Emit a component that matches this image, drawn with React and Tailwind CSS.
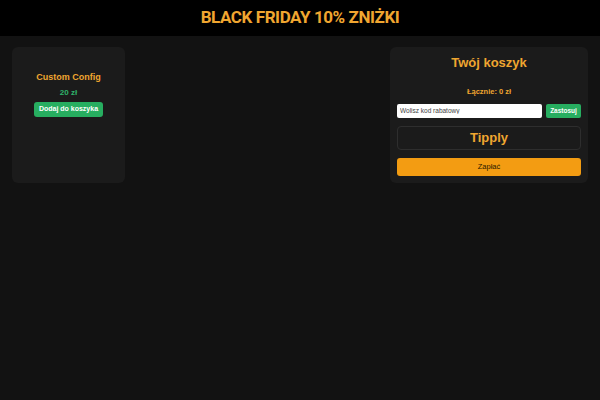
import React from 'react';

const App = () => {
  return (
    <div className="min-h-[400px] bg-[#121212] font-['Liberation_Sans',Arial,sans-serif]">
      {/* Promo banner */}
      <header className="h-9 bg-black flex items-center justify-center">
        <h1 className="font-['Roboto',sans-serif] font-bold text-[17px] text-[#f0a630] tracking-tight">BLACK FRIDAY 10% ZNIŻKI</h1>
      </header>

      <main className="flex justify-between items-start px-3 pt-[11px]">
        {/* Product card */}
        <div className="w-[113px] h-[136px] bg-[#1b1b1b] rounded-md flex flex-col items-center pt-[24px]">
          <h3 className="text-[9px] font-bold text-[#f0a630]">Custom Config</h3>
          <p className="text-[8px] font-bold text-[#2fb36b] mt-[2px]">20 zł</p>
          <button className="mt-[3px] bg-[#27ae60] text-white text-[7px] font-bold px-[5px] h-[15px] rounded-[3px]">Dodaj do koszyka</button>
        </div>

        {/* Cart */}
        <div className="w-[198px] h-[136px] bg-[#1b1b1b] rounded-md flex flex-col px-[7px] pt-[6px]">
          <h2 className="text-center text-[13px] font-bold text-[#f0a630]">Twój koszyk</h2>
          <p className="text-center text-[7.5px] font-bold text-[#f0a630] mt-[13px]">Łącznie: 0 zł</p>
          <div className="flex gap-[4px] mt-[7px]">
            <input
              className="flex-1 h-[14px] bg-white rounded-[2px] text-[6.5px] px-[3px] text-black placeholder:text-[#444] outline-none"
              placeholder="Wolisz kod rabatowy"
            />
            <button className="w-[35px] h-[14px] bg-[#27ae60] text-white text-[6.5px] font-bold rounded-[2px]">Zastosuj</button>
          </div>
          <div className="mt-[8px] h-[24px] border border-[#2e2e2e] rounded-[4px] flex items-center justify-center">
            <span className="text-[13px] font-bold text-[#f0a630]">Tipply</span>
          </div>
          <button className="mt-[8px] h-[18px] bg-[#f39c12] rounded-[3px] text-[7.5px] text-[#2a1a00]">Zapłać</button>
        </div>
      </main>
    </div>
  );
};

export default App;
